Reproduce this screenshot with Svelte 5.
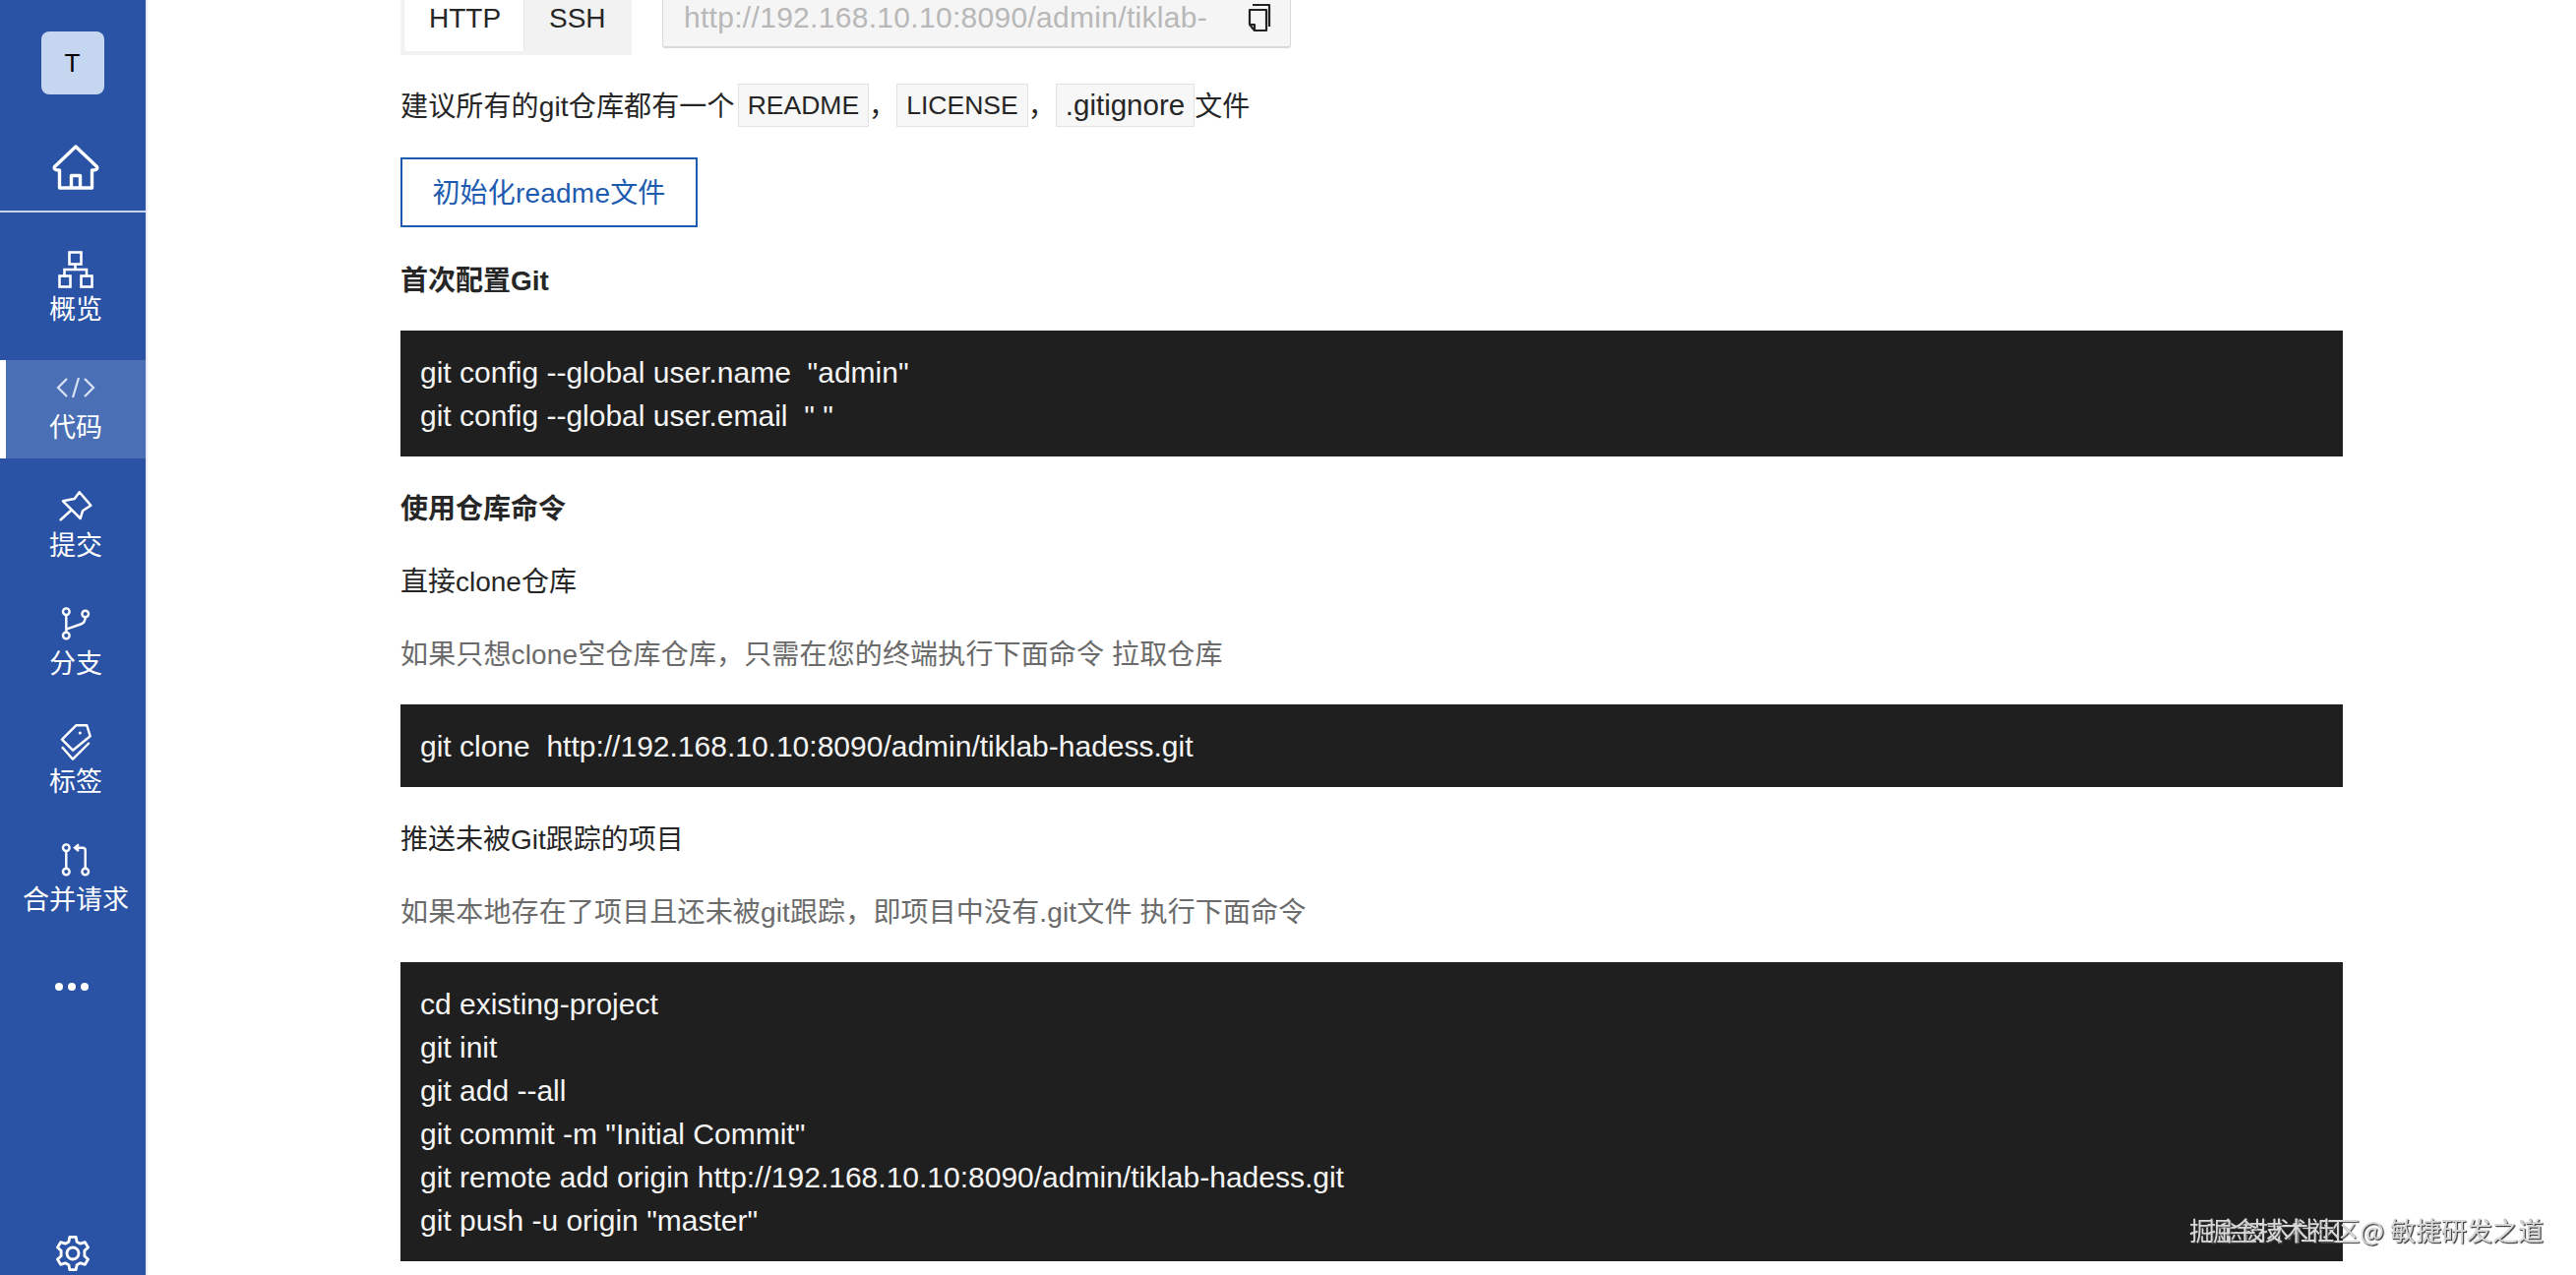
<script>
  const navItems = [
    { label: '概览', icon: 'overview' },
    { label: '代码', icon: 'code', active: true },
    { label: '提交', icon: 'pin' },
    { label: '分支', icon: 'branch' },
    { label: '标签', icon: 'tag' },
    { label: '合并请求', icon: 'merge' }
  ];
</script>

<div class="layout">
  <aside class="sidebar">
    <div class="avatar">T</div>
    <svg class="home" width="48" height="46" viewBox="0 0 48 46" fill="none" stroke="#fff" stroke-width="3.4" stroke-linejoin="round">
      <path d="M24 2 L2.5 22.5 Q1 26 7.5 26 V44 H40.5 V26 Q47 26 45.5 22.5 Z" />
      <path d="M19.5 44 V31.5 H28.5 V44" />
    </svg>
    <div class="divider"></div>

    <nav class="nav">
      {#each navItems as item}
        <div class="nav-item" class:active={item.active}>
          <div class="nav-icon">
            {#if item.icon === 'overview'}
              <svg width="36" height="38" viewBox="0 0 36 38" fill="none" stroke="#fff" stroke-width="2.6">
                <rect x="11.5" y="1.5" width="12" height="12" />
                <path d="M17.5 13.5 V19 M6.5 27 V19 H29 V27" />
                <rect x="1.5" y="25.5" width="11" height="11" />
                <rect x="23.5" y="25.5" width="11" height="11" />
              </svg>
            {:else if item.icon === 'code'}
              <svg width="40" height="24" viewBox="0 0 40 24" fill="none" stroke="#d9e3f5" stroke-width="2.2">
                <path d="M11 3 L2 12 L11 21 M29 3 L38 12 L29 21 M23 2 L17 22" />
              </svg>
            {:else if item.icon === 'pin'}
              <svg width="38" height="32" viewBox="0 0 38 32" fill="none" stroke="#fff" stroke-width="2.5" stroke-linejoin="round" stroke-linecap="round">
                <path d="M22.7 2.3 L34.3 15.7 L26 21.3 L23.7 29 L6 11.3 L17.7 9 Z" />
                <path d="M13.7 21.3 L3.7 30.3" />
              </svg>
            {:else if item.icon === 'branch'}
              <svg width="30" height="34" viewBox="0 0 30 34" fill="none" stroke="#fff" stroke-width="2.4">
                <circle cx="5.3" cy="4.7" r="3.3" />
                <circle cx="24.7" cy="7" r="3.3" />
                <circle cx="5.3" cy="29" r="3.3" />
                <path d="M5.3 8 V25.7 M6 22.3 L20 17.5 Q24.7 16 24.7 10.3" />
              </svg>
            {:else if item.icon === 'tag'}
              <svg width="34" height="38" viewBox="0 0 34 38" fill="none" stroke="#fff" stroke-width="2.4" stroke-linejoin="round">
                <path d="M3 16.7 L17.3 2.3 H28.3 L31.7 13.3 L14 27.7 Z" />
                <path d="M3 24.3 L14 36.7 L30.7 20" />
                <circle cx="21.3" cy="10" r="1.6" fill="#fff" stroke="none" />
              </svg>
            {:else if item.icon === 'merge'}
              <svg width="30" height="34" viewBox="0 0 30 34" fill="none" stroke="#fff" stroke-width="2.4">
                <circle cx="5.3" cy="4.7" r="3.3" />
                <circle cx="5.3" cy="29" r="3.3" />
                <circle cx="24.7" cy="29" r="3.3" />
                <path d="M5.3 8 V25.7 M24.7 25.7 V7 Q24.7 4.7 22 4.7 H14 M18 1.3 L14 4.7 L18 8" />
              </svg>
            {/if}
          </div>
          <span class="nav-label">{item.label}</span>
        </div>
      {/each}
    </nav>

    <div class="more"><i></i><i></i><i></i></div>

    <svg class="gear" width="38" height="40" viewBox="0 0 24 24" fill="none" stroke="#fff" stroke-width="1.8" stroke-linejoin="round">
      <circle cx="12" cy="12" r="3.8" />
      <path d="M10 1.5 H14 L14.6 4.6 L16.8 5.8 L19.8 4.8 L21.8 8.2 L19.5 10.3 V13.7 L21.8 15.8 L19.8 19.2 L16.8 18.2 L14.6 19.4 L14 22.5 H10 L9.4 19.4 L7.2 18.2 L4.2 19.2 L2.2 15.8 L4.5 13.7 V10.3 L2.2 8.2 L4.2 4.8 L7.2 5.8 L9.4 4.6 Z" />
    </svg>
  </aside>

  <main class="content">
    <div class="clone-row">
      <div class="tabs">
        <div class="tab selected">HTTP</div>
        <div class="tab">SSH</div>
      </div>
      <div class="url-box">
        <span class="url">http://192.168.10.10:8090/admin/tiklab-</span>
        <svg width="24" height="30" viewBox="0 0 24 30" fill="none" stroke="#222" stroke-width="2.2" stroke-linejoin="round">
          <path d="M5 2 H22 V24" />
          <path d="M2 7 H19 V28 H7 L2 22 Z M2 22 H7 V28" />
        </svg>
      </div>
    </div>

    <p class="suggest">建议所有的git仓库都有一个<code class="caps first">README</code>，<code class="caps">LICENSE</code>，<code>.gitignore</code>文件</p>

    <button class="init-btn">初始化readme文件</button>

    <p class="title">首次配置Git</p>
    <pre class="block">git config --global user.name  "admin"
git config --global user.email  " "</pre>

    <p class="title">使用仓库命令</p>
    <p>直接clone仓库</p>
    <p class="muted">如果只想clone空仓库仓库，只需在您的终端执行下面命令 拉取仓库</p>
    <pre class="block">git clone  http://192.168.10.10:8090/admin/tiklab-hadess.git</pre>

    <p>推送未被Git跟踪的项目</p>
    <p class="muted">如果本地存在了项目且还未被git跟踪，即项目中没有.git文件 执行下面命令</p>
    <pre class="block">cd existing-project
git init
git add --all
git commit -m "Initial Commit"
git remote add origin http://192.168.10.10:8090/admin/tiklab-hadess.git
git push -u origin "master"</pre>
  </main>
</div>

<div class="watermark">
  <span>掘金技术社区   @ 敏捷研发之道</span>
  <span>掘金技术社区@ 敏捷研发之道</span>
</div>

<style>
  :global(body) {
    margin: 0;
    background: #fff;
    overflow: hidden;
  }

  .layout {
    display: flex;
    height: 1296px;
    overflow: hidden;
    font-family: "Liberation Sans", "Noto Sans CJK SC", sans-serif;
    font-size: 28px;
    line-height: 44px;
    color: #262626;
  }

  .sidebar {
    width: 148px;
    flex: none;
    display: flex;
    flex-direction: column;
    align-items: center;
    background: #2a52a5;
    border-right: 2px solid #e6ecf6;
    color: #fff;
  }

  .avatar {
    width: 64px;
    height: 64px;
    margin-top: 32px;
    margin-left: -1px;
    border-radius: 8px;
    background: #c5d6f0;
    color: #000;
    font-size: 26px;
    display: flex;
    align-items: center;
    justify-content: center;
  }

  .home {
    margin-top: 51px;
    margin-left: 6px;
  }

  .divider {
    width: 100%;
    height: 2px;
    margin-top: 21px;
    background: #c8d4ec;
  }

  .nav {
    width: 100%;
    margin-top: 30px;
    display: flex;
    flex-direction: column;
    gap: 20px;
  }

  .nav-item {
    height: 100px;
    box-sizing: border-box;
    padding-top: 8px;
    border-left: 6px solid transparent;
    display: flex;
    flex-direction: column;
    align-items: center;
  }

  .nav-item.active {
    background: #4a6fb5;
    border-left-color: #fff;
  }

  .nav-icon {
    height: 40px;
    display: flex;
    align-items: center;
    justify-content: center;
  }

  .nav-label {
    margin-top: 4px;
    line-height: 34px;
    font-size: 27px;
    white-space: nowrap;
  }

  .more {
    display: flex;
    gap: 5px;
    margin-top: 53px;
    margin-right: 3px;
  }

  .more i {
    width: 8px;
    height: 8px;
    border-radius: 50%;
    background: #fff;
  }

  .gear {
    margin-top: auto;
    margin-bottom: 2px;
  }

  .content {
    flex: none;
    width: 1974px;
    margin-left: 257px;
    display: flex;
    flex-direction: column;
    gap: 30px;
  }

  .clone-row {
    height: 55px;
    display: flex;
    align-items: flex-start;
    gap: 31px;
  }

  .tabs {
    display: flex;
    height: 56px;
    width: 235px;
    box-sizing: border-box;
    padding: 0 0 4px 4px;
    background: #f2f2f2;
  }

  .tab {
    height: 52px;
    box-sizing: border-box;
    padding: 0 25px;
    line-height: 37px;
    color: #262626;
  }

  .tab.selected {
    width: 122px;
    box-sizing: border-box;
    background: #fff;
    border-radius: 0 0 0 4px;
    border-right: 1px solid #e6e6e6;
  }

  .url-box {
    width: 639px;
    height: 49px;
    box-sizing: border-box;
    padding: 0 19px 0 21px;
    display: flex;
    justify-content: space-between;
    background: #f5f5f5;
    border: 1px solid #d9d9d9;
    border-top: 0;
    border-bottom-width: 2px;
    border-radius: 0 0 3px 3px;
    color: #b8b8b8;
    font-size: 30px;
    letter-spacing: 0.3px;
    line-height: 36px;
    white-space: nowrap;
  }

  .url {
    width: 540px;
    overflow: hidden;
  }

  .url-box svg {
    margin-top: 3px;
  }

  p {
    margin: 0;
    height: 44px;
    line-height: 47px;
    white-space: nowrap;
  }

  .suggest {
    letter-spacing: 0.15px;
  }

  .suggest code {
    display: inline-block;
    height: 44px;
    box-sizing: border-box;
    padding: 0 9px;
    background: #f7f7f7;
    border: 1px solid #e3e3e3;
    font-family: inherit;
    font-size: 29.5px;
    letter-spacing: 0;
    line-height: 42px;
    vertical-align: top;
  }

  .suggest code.caps {
    font-size: 26.5px;
  }

  .suggest code.first {
    margin-left: 3px;
  }

  .init-btn {
    align-self: flex-start;
    width: 302px;
    height: 71px;
    margin-top: 1px;
    margin-bottom: 1px;
    padding: 2px 0 0;
    background: #fff;
    border: 2px solid #1d5bb0;
    color: #1d5bb0;
    font: inherit;
    letter-spacing: 0.2px;
  }

  .title {
    font-weight: bold;
  }

  .muted {
    color: #6b6b6b;
    letter-spacing: 0.15px;
  }

  .block {
    margin: 0;
    padding: 21px 20px 19px;
    background: #1f1f1f;
    color: #f5f5f5;
    font-family: inherit;
    font-size: 30px;
    line-height: 44px;
    white-space: pre;
    flex: none;
  }

  .watermark {
    position: fixed;
    right: 33px;
    top: 1234px;
    width: 400px;
    height: 32px;
    font-family: "Noto Sans CJK SC", sans-serif;
    font-size: 26px;
    line-height: 32px;
    color: #d8d8d8;
    text-shadow: 1px 1px 1px #444;
  }

  .watermark span {
    position: absolute;
    right: 0;
    white-space: pre;
  }
</style>
